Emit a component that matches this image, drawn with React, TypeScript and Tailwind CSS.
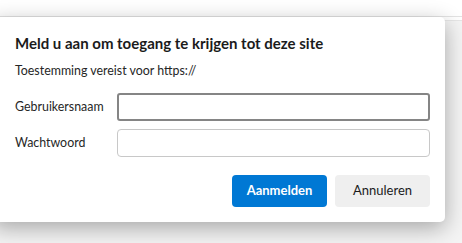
const App = () => {
  return (
    <div className="relative w-[462px] h-[243px] overflow-hidden bg-white font-['Lato',sans-serif]">
      {/* page behind the dialog */}
      <div className="h-[17px] border-b border-[#e3e3e3] bg-white" />
      <div className="h-[4px] border-b border-[#e6e6e6] bg-white" />
      <div className="h-full bg-[#f4f4f4]" />

      <div className="absolute left-[-8px] top-[17px] w-[453px] h-[205px] rounded-[5px] bg-white shadow-[0_6px_22px_rgba(0,0,0,0.32)] pl-[23px] pr-[15px] pt-[16px]">
        <h2 className="text-[15px] leading-[20px] font-bold text-[#1b1b1b] m-0">
          Meld u aan om toegang te krijgen tot deze site
        </h2>
        <p className="mt-[9px] text-[12.4px] leading-[18px] text-[#262626]">Toestemming vereist voor https://</p>

        <div className="mt-[13px] flex flex-col gap-[8px]">
          <label className="flex items-center">
            <span className="w-[102px] text-[12.4px] text-[#262626]">Gebruikersnaam</span>
            <input className="w-[313px] h-[28px] border-2 border-[#858585] rounded-[3px] px-2 text-[13px] outline-none" />
          </label>
          <label className="flex items-center">
            <span className="w-[102px] text-[12.4px] text-[#262626]">Wachtwoord</span>
            <input type="password" className="w-[313px] h-[28px] border border-[#c8c8c8] rounded-[4px] px-2 text-[13px] outline-none" />
          </label>
        </div>

        <div className="mt-[18px] flex justify-end gap-[8px]">
          <button className="w-[95px] h-[32px] rounded-[4px] bg-[#0078d4] text-white text-[13px] font-bold">Aanmelden</button>
          <button className="w-[95px] h-[32px] rounded-[4px] bg-[#efefef] text-[#1b1b1b] text-[13px]">Annuleren</button>
        </div>
      </div>
    </div>
  );
};

export default App;
